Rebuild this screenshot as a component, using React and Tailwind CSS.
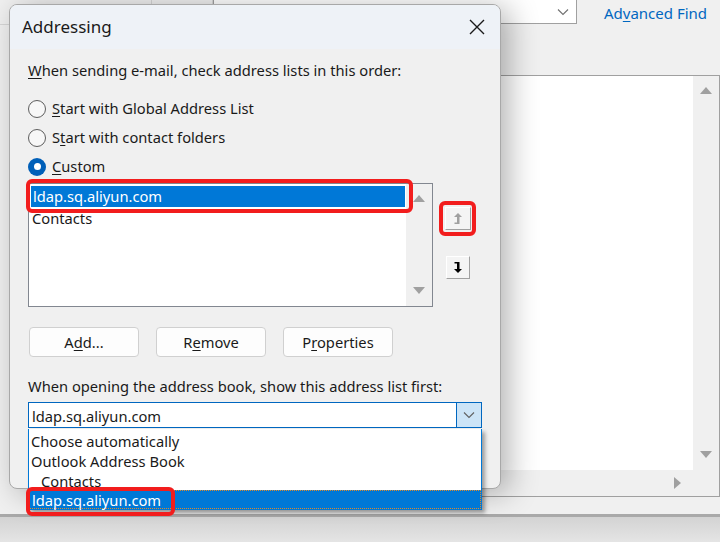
import React from 'react'

const font = { fontFamily: '"Segoe UI", "Noto Sans", "Open Sans", sans-serif' }

function U({ children }) {
  return <span className="underline underline-offset-2 decoration-1">{children}</span>
}

function Radio({ checked, children }) {
  return (
    <div className="flex items-center h-[29px]">
      {checked ? (
        <span className="w-[18px] h-[18px] rounded-full bg-[#005fb8] flex items-center justify-center">
          <span className="w-[7px] h-[7px] rounded-full bg-white" />
        </span>
      ) : (
        <span className="w-[18px] h-[18px] rounded-full border border-[#5d5d5d] bg-[#f7f7f7]" />
      )}
      <span className="ml-[6px] text-[14.7px] text-[#1a1a1a]">{children}</span>
    </div>
  )
}

function UpArrow({ color }) {
  return (
    <svg width="10" height="13" viewBox="0 0 10 13">
      <path d="M5 1 L9 5 L6.5 5 L6.5 12 L1.5 12 L1.5 10.5 L4 10.5 L4 5 L1 5 Z" fill={color} />
    </svg>
  )
}

function DownArrow({ color }) {
  return (
    <svg width="10" height="13" viewBox="0 0 10 13">
      <path d="M5 12 L9 8 L6.5 8 L6.5 1 L1.5 1 L1.5 2.5 L4 2.5 L4 8 L1 8 Z" fill={color} />
    </svg>
  )
}

function Tri({ dir, color = '#a0a0a0', size = 12 }) {
  const d = {
    up: 'M0 8 L6 1 L12 8 Z',
    down: 'M0 1 L12 1 L6 8 Z',
    right: 'M1 0 L8 6 L1 12 Z',
  }[dir]
  return (
    <svg width={size} height={size} viewBox="0 0 12 12" className={dir === 'right' ? '' : 'mt-[2px]'}>
      <path d={d} fill={color} />
    </svg>
  )
}

function Chevron({ color = '#606060' }) {
  return (
    <svg width="12" height="8" viewBox="0 0 12 8">
      <path d="M1 1.5 L6 6.5 L11 1.5" stroke={color} strokeWidth="1.1" fill="none" />
    </svg>
  )
}

function PushButton({ children }) {
  return (
    <button className="w-[110px] h-[30px] rounded-[4px] border border-[#d0d0d0] bg-[#fdfdfd] text-[14.7px] text-[#1a1a1a]">
      {children}
    </button>
  )
}

export default function App() {
  return (
    <div className="relative w-[720px] h-[542px] overflow-hidden bg-[#f0f0f0] text-[#1a1a1a]" style={font}>
      {/* background window */}
      <div className="flex h-[25px]">
        <div className="w-[152px] border-r border-b border-[#d6d6d6]" />
        <div className="w-[61px] border-r border-[#d6d6d6]" />
        <div className="w-[364px] h-[24px] bg-white border border-[#a0a0a0] border-t-0 flex items-center justify-end pr-[7px]">
          <Chevron color="#707070" />
        </div>
        <div className="ml-[27px] text-[15px] leading-[26px] text-[#0067c0]">
          Ad<U>v</U>anced Find
        </div>
      </div>
      <div className="mt-[50px] ml-[420px] w-[300px] h-[422px] border-t border-b border-r border-[#a0a0a0] flex flex-col">
        <div className="flex flex-1">
          <div className="flex-1 bg-white" />
          <div className="w-[26px] flex flex-col items-center justify-between py-[8px]">
            <Tri dir="up" />
            <Tri dir="down" />
          </div>
        </div>
        <div className="h-[26px] flex items-center justify-end pr-[34px]">
          <Tri dir="right" />
        </div>
      </div>
      <div className="h-[20px] border-b-[3px] border-[#a9a9a9]" />
      <div className="h-[30px] bg-gradient-to-b from-[#d3d3d3] to-[#e8e8e8]" />

      {/* Addressing dialog */}
      <div className="absolute left-[9px] top-[4px] w-[492px] h-[485px] rounded-[8px] border border-[#a8a8a8] bg-[#f0f0f0] shadow-[8px_4px_30px_rgba(0,0,0,0.3)] overflow-hidden flex flex-col">
        <div className="h-[44px] bg-[#eef2f7] flex items-center justify-between pl-[12px] pr-[15px]">
          <span className="text-[17px] text-[#1a1a1a]">Addressing</span>
          <svg width="16" height="16" viewBox="0 0 16 16">
            <path d="M1 1 L15 15 M15 1 L1 15" stroke="#1a1a1a" strokeWidth="1.4" />
          </svg>
        </div>
        <div className="flex-1 pl-[18px] pr-[18px] pt-[11px]">
          <div className="text-[14.7px] leading-[20px] h-[20px]">
            <U>W</U>hen sending e-mail, check address lists in this order:
          </div>
          <div className="mt-[14px] flex flex-col">
            <Radio>
              <U>S</U>tart with Global Address List
            </Radio>
            <Radio>
              S<U>t</U>art with contact folders
            </Radio>
            <Radio checked>
              <U>C</U>ustom
            </Radio>
          </div>
          <div className="mt-[2px] flex">
            <div className="w-[405px] h-[124px] border border-[#828790] bg-white flex">
              <div className="flex-1 pt-[1px] pl-[1px] text-[14.7px] leading-[20px]">
                <div className="h-[23px] bg-[#0078d7] text-white pl-[2px] border border-white">
                  ldap.sq.aliyun.com
                </div>
                <div className="pl-[2px]">Contacts</div>
              </div>
              <div className="w-[26px] bg-[#f0f0f0] flex flex-col items-center justify-between py-[8px]">
                <Tri dir="up" />
                <Tri dir="down" />
              </div>
            </div>
            <div className="ml-[12px] flex flex-col pt-[24px]">
              <div className="w-[26px] h-[23px] bg-[#f4f4f4] border border-t-white border-l-white border-r-[#a0a0a0] border-b-[#a0a0a0] flex items-center justify-center">
                <UpArrow color="#a0a0a0" />
              </div>
              <div className="mt-[26px] ml-[1px] w-[24px] h-[23px] bg-[#f4f4f4] border border-t-white border-l-white border-r-[#a0a0a0] border-b-[#a0a0a0] flex items-center justify-center">
                <DownArrow color="#000" />
              </div>
            </div>
          </div>
          <div className="mt-[20px] flex gap-[17px] pl-[1px]">
            <PushButton>
              A<U>d</U>d...
            </PushButton>
            <PushButton>
              R<U>e</U>move
            </PushButton>
            <PushButton>
              P<U>r</U>operties
            </PushButton>
          </div>
          <div className="mt-[19px] text-[14.7px] leading-[20px]">
            When opening the address book, show this address list first:
          </div>
          <div className="mt-[6px] w-[454px] h-[26px] border border-[#0067c0] bg-white flex">
            <div className="flex-1 pl-[3px] text-[14.7px] leading-[26px]">ldap.sq.aliyun.com</div>
            <div className="w-[25px] bg-[#cce4f7] border-l border-[#0067c0] flex items-center justify-center">
              <Chevron />
            </div>
          </div>
        </div>
      </div>

      {/* open dropdown list */}
      <div className="absolute left-[28px] top-[429px] w-[454px] h-[81px] bg-white border border-[#0078d7] border-t-0 shadow-[3px_3px_4px_rgba(0,0,0,0.35)] pt-[2px] text-[14.7px] leading-[20px]">
        <div className="pl-[2px]">Choose automatically</div>
        <div className="pl-[2px]">Outlook Address Book</div>
        <div className="pl-[12px] h-[19px]">Contacts</div>
        <div className="pl-[2px] h-[19px] leading-[18px] bg-[#0078d7] text-white border border-dotted border-[#e08a2a]">
          ldap.sq.aliyun.com
        </div>
      </div>

      {/* red highlight marks */}
      <div className="absolute left-[26px] top-[179px] w-[387px] h-[34px] rounded-[6px] border-4 border-[#f21d1d]" />
      <div className="absolute left-[439px] top-[201px] w-[37px] h-[35px] rounded-[6px] border-4 border-[#f21d1d]" />
      <div className="absolute left-[26px] top-[487px] w-[149px] h-[29px] rounded-[6px] border-4 border-[#f21d1d]" />
    </div>
  )
}
